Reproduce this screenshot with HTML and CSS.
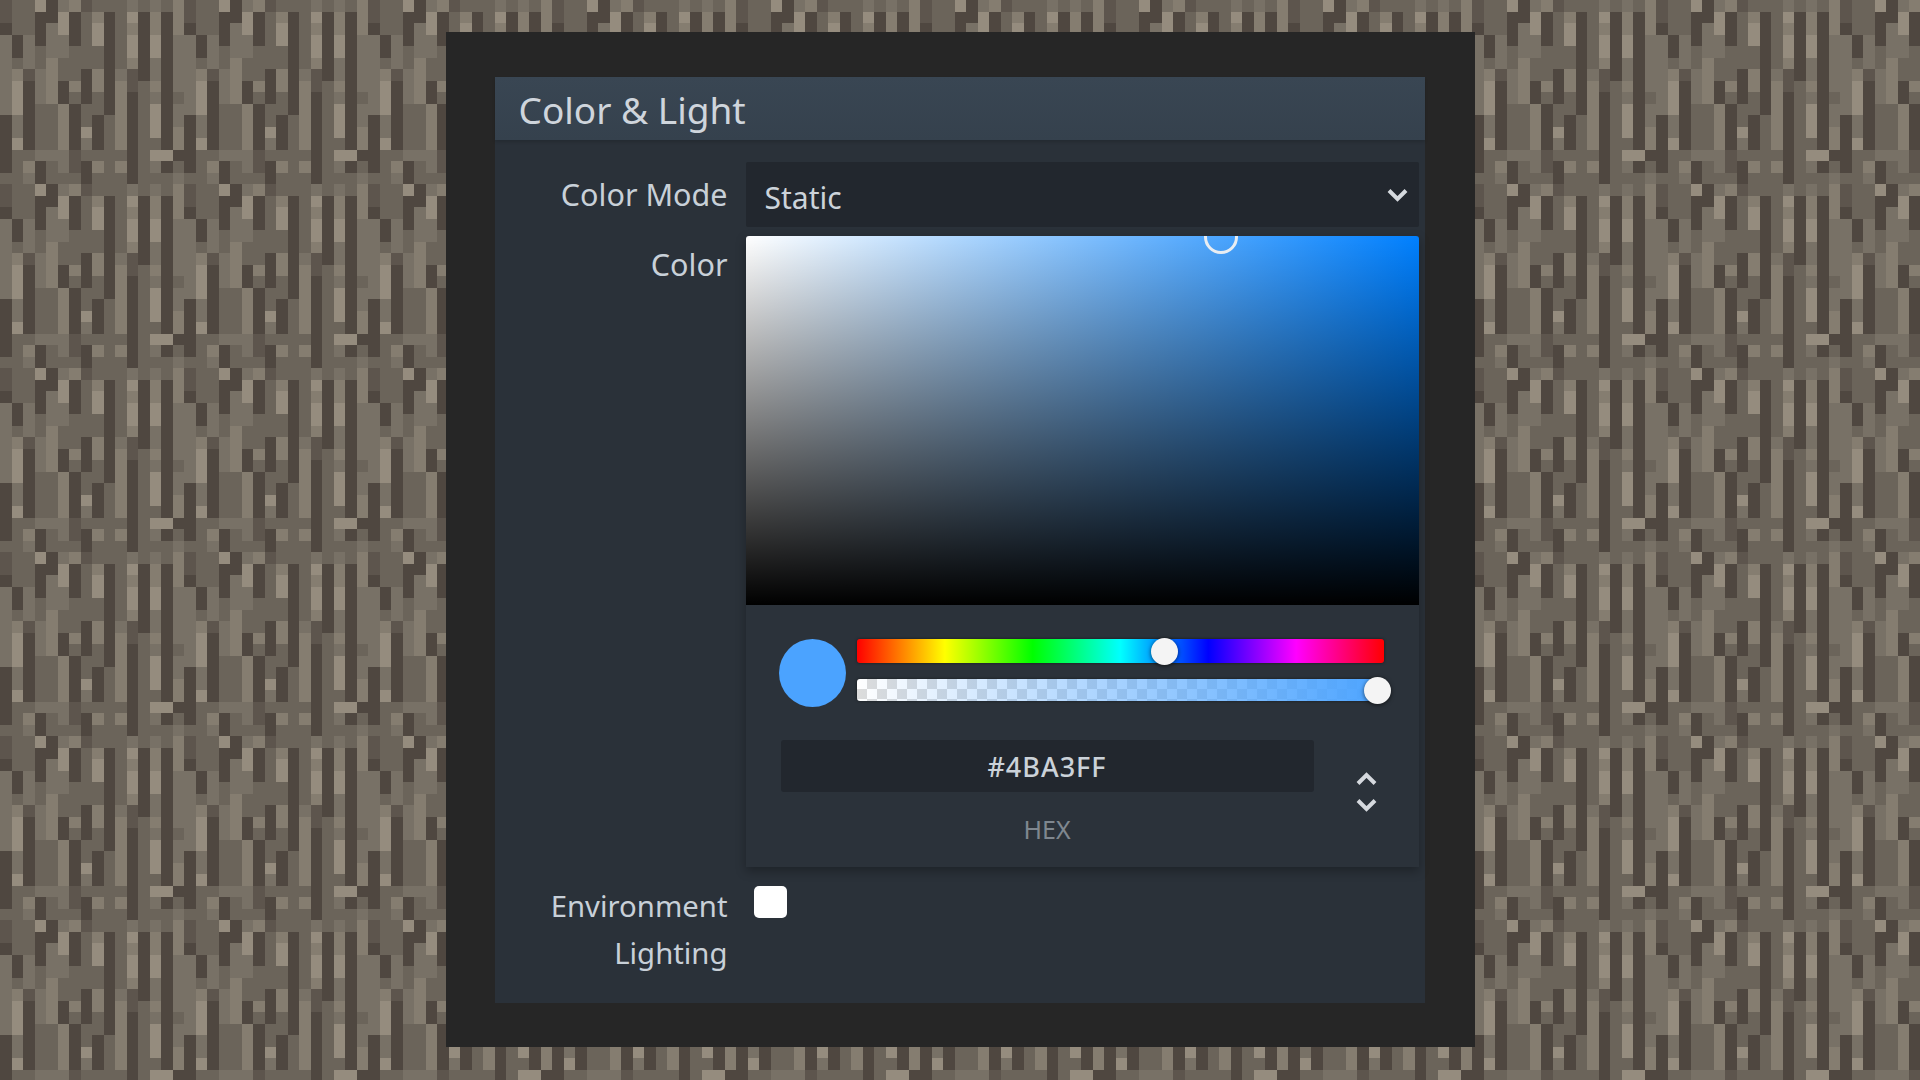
FILE: index.html
```html
<!DOCTYPE html>
<html lang="en">

<head>
    <meta charset="UTF-8">
    <meta name="viewport" content="width=device-width, initial-scale=1.0">
    <title>Color &amp; Light</title>
    <link rel="stylesheet" href="styles.css">
</head>

<body>
    <svg class="texture" width="1920" height="1080">
        <defs>
            <pattern id="bark" width="184" height="184" patternUnits="userSpaceOnUse"></pattern>
        </defs>
        <rect width="1920" height="1080" fill="url(#bark)"></rect>
    </svg>

    <div class="frame">
        <section class="panel">
            <h2 class="panel-title">Color &amp; Light</h2>

            <div class="fields">
                <label class="field-label field-label-mode">Color Mode</label>
                <div class="select-box">
                    <span class="select-value">Static</span>
                    <svg class="chevron" viewBox="0 0 21 14"><path d="M2 2.500l8.500 8.500 8.500-8.500"></path></svg>
                </div>

                <label class="field-label field-label-color">Color</label>
                <div class="picker">
                    <div class="sv-area">
                        <span class="sv-handle"></span>
                    </div>
                    <div class="picker-controls">
                        <div class="slider-row">
                            <span class="swatch"></span>
                            <div class="sliders">
                                <div class="hue-bar"><span class="thumb thumb-hue"></span></div>
                                <div class="alpha-bar"><span class="thumb thumb-alpha"></span></div>
                            </div>
                        </div>
                        <div class="hex-row">
                            <div class="hex-col">
                                <div class="hex-input">#4BA3FF</div>
                                <div class="hex-label">HEX</div>
                            </div>
                            <div class="stepper">
                                <svg class="chevron" viewBox="0 0 21 14"><path d="M2 11.500l8.500-8.500 8.500 8.500"></path></svg>
                                <svg class="chevron" viewBox="0 0 21 14"><path d="M2 2.500l8.500 8.500 8.500-8.500"></path></svg>
                            </div>
                        </div>
                    </div>
                </div>

                <label class="field-label field-label-env">Environment Lighting</label>
                <span class="checkbox"></span>
            </div>
        </section>
    </div>

    <script>
        // 16x16 bark tile, one letter per block, a = darkest
        let rows = [
            "bccfadebcccdcdce",
            "bccaafaceacfaeae",
            "accadfacfaceaeae",
            "dadaddacfacfafad",
            "dadcddcccacfafad",
            "dcdceccccaceadad",
            "debdeccaeadbadad",
            "dfadeaeaeaebcead",
            "dfadeacacaeacdac",
            "dfacceaccaeacfad",
            "adacceacaceacfad",
            "adacceafaceacfae",
            "afacceadaceaccae",
            "accdddbccccacffa",
            "aceacdbaeceacdac",
            "ccdacccacccacccd"
        ];
        let colors = {
            a: "#4f4740", b: "#5d554d", c: "#6b645a",
            d: "#787166", e: "#857d70", f: "#958c7e"
        };
        let pattern = document.querySelector("#bark");

        rows.forEach(function(row, y) {
            row.split("").forEach(function(letter, x) {
                let block = document.createElementNS("http://www.w3.org/2000/svg", "rect");
                block.setAttribute("x", x * 11.5);
                block.setAttribute("y", y * 11.5);
                block.setAttribute("width", 11.5);
                block.setAttribute("height", 11.5);
                block.setAttribute("fill", colors[letter]);
                block.setAttribute("shape-rendering", "crispEdges");
                pattern.appendChild(block);
            });
        });
    </script>
</body>

</html>
```

FILE: styles.css
```css
body {
    margin: 0;
    height: 1080px;
    overflow: hidden;
    background-color: #6b645a;
    font-family: "Noto Sans", "Open Sans", sans-serif;
    display: flex;
    justify-content: center;
    align-items: flex-start;
    padding-top: 32px;
    box-sizing: border-box;
}

.texture {
    position: fixed;
    top: 0;
    left: 0;
    z-index: -1;
    filter: blur(0.6px);
}

.frame {
    width: 930px;
    padding: 45px 50px 44px 49px;
    background-color: #262626;
}

.panel {
    height: 926px;
    background-color: #2a3139;
}

.panel-title {
    margin: 0;
    height: 63px;
    padding-left: 24px;
    font-size: 37px;
    font-weight: 400;
    line-height: 66px;
    color: #cfd5dc;
    background: linear-gradient(#394653, #35414d);
    box-shadow: 0 2px 3px rgba(0, 0, 0, 0.15);
}

.fields {
    display: grid;
    grid-template-columns: 233px 673px;
    column-gap: 18px;
    padding-top: 22px;
}

.field-label {
    font-size: 29px;
    line-height: 47px;
    text-align: right;
    color: #c8d0d8;
}

.field-label-mode {
    font-size: 30.500px;
    padding-bottom: 9px;
    align-self: center;
}

.field-label-color {
    font-size: 30.500px;
    padding-top: 5px;
}

.field-label-env {
    font-size: 29.300px;
}

.select-box {
    height: 65px;
    padding: 0 11px 0 19px;
    margin-bottom: 9px;
    background-color: #22272e;
    display: flex;
    align-items: center;
    justify-content: space-between;
    border-radius: 2px;
}

.select-value {
    font-size: 30px;
    color: #ccd3da;
    padding-top: 5px;
}

.chevron {
    display: block;
    width: 21px;
    height: 14px;
    fill: none;
    stroke: #d5d9de;
    stroke-width: 4;
}

.picker {
    height: 631px;
    margin-bottom: 16px;
    background-color: #2b323a;
    box-shadow: 0 4px 10px rgba(0, 0, 0, 0.3);
}

.sv-area {
    position: relative;
    height: 369px;
    overflow: hidden;
    border-radius: 3px 3px 0 0;
    background:
        linear-gradient(rgba(0, 0, 0, 0), #000),
        linear-gradient(90deg, #fff, #0080ff);
}

.sv-handle {
    position: absolute;
    left: 458px;
    top: -16px;
    width: 28px;
    height: 28px;
    border: 3px solid #e8edf2;
    border-radius: 50%;
}

.picker-controls {
    padding: 34px 35px 0 33px;
}

.slider-row {
    display: flex;
    gap: 11px;
}

.swatch {
    width: 67px;
    height: 68px;
    border-radius: 50%;
    background-color: #4ba3ff;
}

.sliders {
    flex: 1;
    display: flex;
    flex-direction: column;
    gap: 16px;
}

.hue-bar,
.alpha-bar {
    position: relative;
    border-radius: 3px;
    box-shadow: 0 0 3px rgba(0, 0, 0, 0.5);
}

.hue-bar {
    height: 24px;
    background: linear-gradient(90deg, #f00, #ff0 16.66%, #0f0 33.33%, #0ff 50%, #00f 66.66%, #f0f 83.33%, #f00);
}

.alpha-bar {
    height: 22px;
    background:
        linear-gradient(90deg, rgba(75, 163, 255, 0), #4ba3ff),
        conic-gradient(#dcdcdc 25%, #fff 25% 50%, #dcdcdc 50% 75%, #fff 75%) 0 0 / 20px 20px;
}

.thumb {
    position: absolute;
    width: 27px;
    height: 27px;
    border-radius: 50%;
    background-color: #f4f4f4;
    box-shadow: 0 1px 4px rgba(0, 0, 0, 0.6);
}

.thumb-hue {
    left: 58.500%;
    top: -1.500px;
    margin-left: -13.500px;
}

.thumb-alpha {
    right: -7px;
    top: -2.500px;
}

.hex-row {
    display: flex;
    margin-top: 33px;
}

.hex-col {
    width: 533px;
    margin-left: 2px;
    text-align: center;
}

.hex-input {
    height: 52px;
    line-height: 53px;
    font-size: 27px;
    font-weight: 500;
    letter-spacing: 1px;
    color: #cbd2d9;
    background-color: #22272e;
    border-radius: 3px;
}

.hex-label {
    margin-top: 19px;
    font-size: 25px;
    line-height: 36px;
    color: #7f878f;
}

.stepper {
    display: flex;
    flex-direction: column;
    gap: 12px;
    margin: 32px 0 0 42px;
}

.checkbox {
    width: 33px;
    height: 32px;
    margin: 3px 0 0 8px;
    border-radius: 5px;
    background-color: #fff;
}
```
